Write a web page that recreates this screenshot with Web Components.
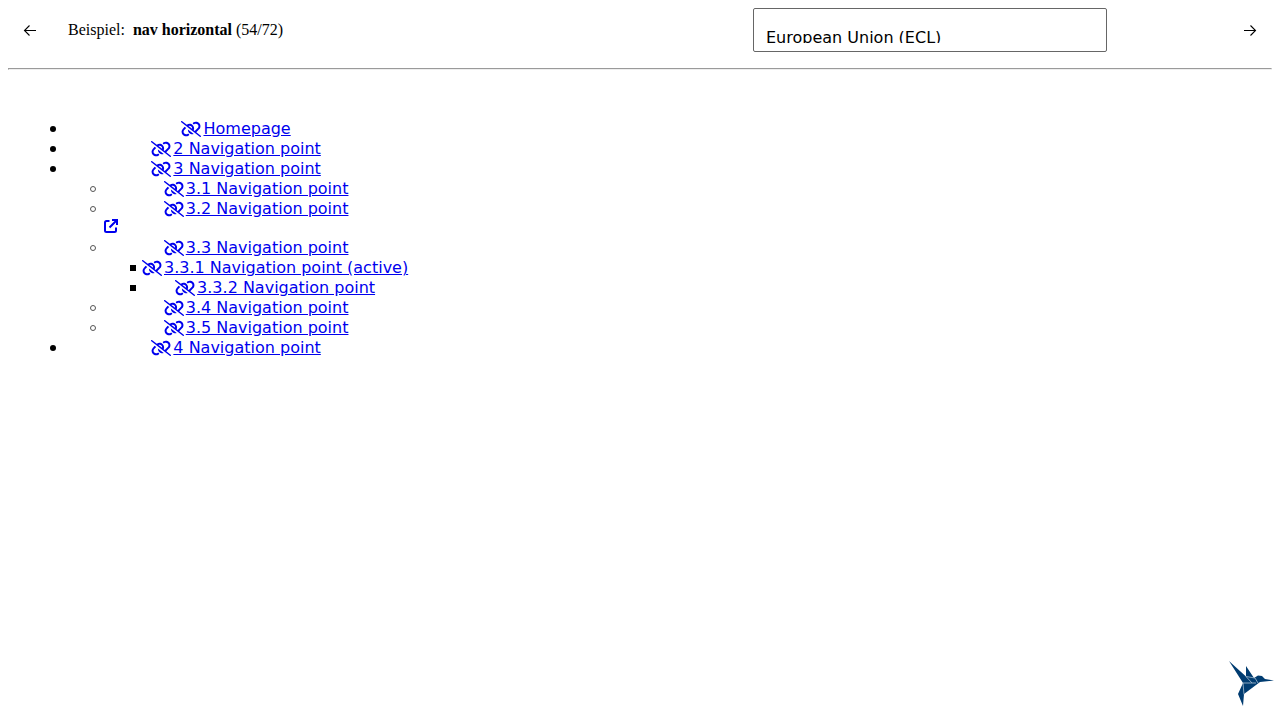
<!DOCTYPE html>
<html lang="de">
<head>
<meta charset="utf-8">
<meta name="viewport" content="width=device-width, initial-scale=1">
<title>nav horizontal</title>
<style>
body { margin: 8px; font: 16px "Liberation Serif", serif; color: #000; background: #fff; }
hr { margin: 16px 0 0; }
main { padding-top: 49px; }
</style>
</head>
<body>
<sample-bar><span slot="name">nav horizontal</span><span slot="position">(54/72)</span></sample-bar>
<hr>
<main><nav-tree></nav-tree></main>
<brand-mark></brand-mark>
<script>
const define = (name, html) => {
  const template = document.createElement('template');
  template.innerHTML = html;
  customElements.define(name, class extends HTMLElement {
    constructor() {
      super();
      this.attachShadow({ mode: 'open' }).append(template.content.cloneNode(true));
    }
  });
};

define('sample-bar', `
<style>
:host { display: grid; grid-template-columns: 44px 1fr 44px; gap: 16px; align-items: center; }
.middle { display: grid; grid-template-columns: 685fr 354fr 105fr; align-items: center; }
p { display: flex; gap: 8px; margin: 0; line-height: 20px; }
button { display: grid; place-items: center; height: 44px; padding: 0; border: 0; background: none; color: inherit; }
svg { display: block; width: 14px; height: 14px; fill: none; stroke: currentColor; stroke-width: 1.1; }
select { box-sizing: border-box; appearance: none; width: 100%; height: 44px; margin: 0; padding: 19px 12px 8px; border: 1px solid #666; border-radius: 2px; background: #fff; color: #000; font: 16px "DejaVu Sans", Verdana, sans-serif; }
</style>
<button type="button" aria-label="Zurück"><svg viewBox="0 0 14 14"><path d="M13 7.500H1.500M6.500 2.500l-5 5 5 5"/></svg></button>
<div class="middle">
  <p><span>Beispiel:</span><span><strong><slot name="name"></slot></strong> <slot name="position"></slot></span></p>
  <select aria-label="Theme"><option>European Union (ECL)</option></select>
</div>
<button type="button" aria-label="Weiter"><svg viewBox="0 0 14 14"><path d="M1 7.500h11.500M7.500 2.500l5 5-5 5"/></svg></button>`);

define('nav-link', `
<style>
:host { display: block; }
a { display: flex; justify-content: center; align-items: center; gap: 2px; color: #00e; line-height: 20px; white-space: nowrap; }
svg { flex: none; width: 20px; height: 16px; fill: currentColor; }
</style>
<a href="#"><svg viewBox="0 0 640 512" aria-hidden="true"><path d="M38.800 5.100C28.400-3.100 13.300-1.200 5.100 9.200S-1.200 34.700 9.200 42.900l592 464c10.400 8.200 25.500 6.300 33.700-4.100s6.300-25.500-4.100-33.700L489.300 358.200l90.500-90.500c56.500-56.500 56.500-148 0-204.500c-50-50-128.800-56.500-186.300-15.400l-1.600 1.100c-14.400 10.300-17.700 30.300-7.400 44.600s30.300 17.700 44.600 7.400l1.600-1.100c32.100-22.900 76-19.300 103.800 8.600c31.500 31.500 31.500 82.500 0 114l-96 96-31.900-25C430.900 239.600 420.100 175.100 377 132c-52.200-52.300-134.500-56.200-191.300-11.700L38.800 5.100zM239 162c30.100-14.900 67.700-9.900 92.800 15.300c20 20 27.500 48.300 21.700 74.500L239 162zM406.600 416.400L220.900 270c-2.100 39.800 12.200 80.100 42.200 110c38.900 38.900 94.400 51 143.600 36.300zm-290-228.500L60.200 244.300c-56.500 56.500-56.500 148 0 204.500c50 50 128.800 56.500 186.300 15.400l1.600-1.100c14.400-10.300 17.700-30.300 7.400-44.600s-30.300-17.700-44.600-7.400l-1.600 1.100c-32.100 22.900-76 19.300-103.800-8.600C74 372 74 321 105.500 289.500l61.800-61.800-50.600-39.900z"/></svg><span><slot></slot></span></a>`);

define('nav-tree', `
<style>
:host { display: block; font: 16px "DejaVu Sans", Verdana, sans-serif; }
nav { width: max-content; padding-left: 14px; }
ul { margin: 0; padding: 0; list-style: none; }
/* Each item keeps its marker in a 40px gutter, centred on the first row. */
li { display: grid; grid-template-columns: 40px auto; }
li > * { grid-column: 2; }
li::before { content: ""; box-sizing: border-box; grid-area: 1 / 1; place-self: center end; width: 6px; height: 6px; margin-right: 6px; border-radius: 50%; background: #000; }
ul ul > li::before { border: 1px solid #555; background: none; }
ul ul ul > li::before { border: 0; border-radius: 0; background: #000; }
ul ul ul { padding-right: 2px; }
.external { display: flex; align-items: flex-start; height: 19px; padding-left: 2px; color: #00e; }
.external svg { width: 14px; height: 14px; fill: none; stroke: currentColor; stroke-width: 2; }
</style>
<nav aria-label="Navigation"><ul>
  <li><nav-link>Homepage</nav-link></li>
  <li><nav-link>2 Navigation point</nav-link></li>
  <li><nav-link>3 Navigation point</nav-link>
    <ul>
      <li><nav-link>3.1 Navigation point</nav-link></li>
      <li><nav-link>3.2 Navigation point</nav-link><span class="external"><svg viewBox="0 0 14 14" aria-hidden="true"><path d="M5.500 2H2.500Q1 2 1 3.500v8Q1 13 2.500 13h8q1.500 0 1.500-1.500v-3M8 1h5v5M13 1L5.500 8.500"/></svg></span></li>
      <li><nav-link>3.3 Navigation point</nav-link>
        <ul>
          <li><nav-link>3.3.1 Navigation point (active)</nav-link></li>
          <li><nav-link>3.3.2 Navigation point</nav-link></li>
        </ul>
      </li>
      <li><nav-link>3.4 Navigation point</nav-link></li>
      <li><nav-link>3.5 Navigation point</nav-link></li>
    </ul>
  </li>
  <li><nav-link>4 Navigation point</nav-link></li>
</ul></nav>`);

define('brand-mark', `
<style>
:host { position: fixed; right: 6px; bottom: 14px; width: 46px; height: 46px; }
svg { display: block; }
</style>
<svg viewBox="0 0 46 46" width="46" height="46" role="img" aria-label="KoliBri"><path fill="#003c71" d="M1 1l17 15.500V6l8 12 4-2.500 4 .5 3 3 9 1.500-14 1.500-8 6-8 6-1 12-5-12L15 23z"/><path fill="none" stroke="#a9c0d3" stroke-width=".8" d="M18 16.500l6 6.500M18 16.500l9 1.500 3 5M15 23h13M15 23l1 11.500"/></svg>`);
</script>
</body>
</html>
